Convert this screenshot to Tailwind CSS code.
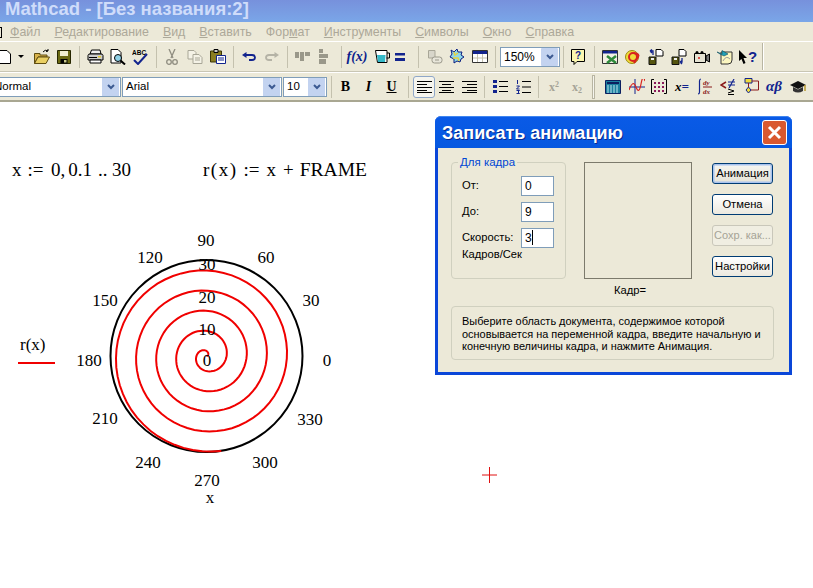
<!DOCTYPE html>
<html><head><meta charset="utf-8"><script src="https://cdn.jsdelivr.net/npm/@tailwindcss/browser@4"></script></head>
<body class="bg-white">
<div class="relative w-[813px] h-[588px] overflow-hidden bg-white font-['DejaVu_Sans',sans-serif] text-black">
  <!-- app title -->
  <div class="h-[22px] bg-gradient-to-b from-[#7791dc] to-[#7aa6e8] pl-[5px] text-[#cfdcfa] font-['Liberation_Sans',sans-serif] font-bold text-[18.500px] leading-[17px] whitespace-nowrap">Mathcad - [Без названия:2]</div>
  <!-- menu -->
  <div class="h-[20px] pt-px bg-[#ece9d8] border-b border-white flex items-center gap-[14px] pl-[10px] text-[#aca899] font-['Liberation_Sans',sans-serif] text-[12.400px] relative whitespace-nowrap">
    <div class="absolute left-0 top-[5px] w-[2px] h-[11px] border-r border-y border-black"></div>
    <span><u>Ф</u>айл</span><span><u>Р</u>едактирование</span><span><u>В</u>ид</span><span><u>В</u>ставить</span><span>Фор<u>м</u>ат</span><span><u>И</u>нструменты</span><span><u>С</u>имволы</span><span><u>О</u>кно</span><span><u>С</u>правка</span>
  </div>
  <!-- standard toolbar -->
  <div class="h-[30px] bg-[#ece9d8] border-b border-[#c9c6b4] flex items-center">
    <div class="w-[11px] flex justify-end"><svg class="w-[11px] h-[16px]" viewBox="0 0 11 16"><path d="M-3 1.5H7L10.500 5V14.500H-3Z" fill="#fff" stroke="#000"/></svg></div>
    <div class="w-[20px] flex justify-center"><svg class="w-[6px] h-[3px]" viewBox="0 0 6 3"><path d="M0 0H6L3 3Z" fill="#000"/></svg></div>
    <div class="w-[21px] flex justify-center"><svg class="w-[16px] h-[15px]" viewBox="0 0 16 15"><path d="M.5 4.500H6V6H13V8H4L.5 14.500Z" fill="#d8b24a" stroke="#5f4d10"/><path d="M4 8H15.500L12 14.500H.5Z" fill="#e9cf63" stroke="#5f4d10"/><path d="M9 3Q11 0 14 2M14 2V0M14 2L12 2.500" fill="none" stroke="#000"/></svg></div>
    <div class="w-[24px] flex justify-center"><svg class="w-[14px] h-[14px]" viewBox="0 0 14 14"><path d="M.5.500H13.500V13.500H.5Z" fill="#6b6a12" stroke="#262600"/><path d="M3 1H11V6H3Z" fill="#f1efcf"/><path d="M3.500 9H10.500V13.500H3.500Z" fill="#000"/><path d="M7 10H9.500V12.500H7Z" fill="#c8c88a"/></svg></div>
    <div class="ml-[3px] w-px h-[22px] bg-[#c4c1ae] mr-[3px]"></div>
    <div class="w-[24px] flex justify-center"><svg class="w-[17px] h-[15px]" viewBox="0 0 17 15"><path d="M4.500 1H13L14 5H3Z" fill="#eee" stroke="#000"/><path d="M1 6.500Q1 5 3 5H14Q16 5 16 6.500V11H1Z" fill="#ccc" stroke="#000"/><path d="M11 7H14V8.500H11Z" fill="#e9cf30"/><path d="M3 11H14V14H3Z" fill="#fff" stroke="#000"/><path d="M2 8.500H10" stroke="#000"/></svg></div>
    <div class="w-[22px] flex justify-center"><svg class="w-[16px] h-[16px]" viewBox="0 0 16 16"><path d="M1 .5H8L11 3.500V14H1Z" fill="#fff" stroke="#000"/><circle cx="8" cy="9" r="3.500" fill="#8fd1e8" stroke="#000"/><path d="M10.500 11.500L15 15.500" stroke="#000" stroke-width="2"/></svg></div>
    <div class="w-[22px] flex justify-center"><svg class="w-[16px] h-[16px]" viewBox="0 0 16 16"><text x="0" y="6" font-size="6.500" font-weight="700" font-family="Liberation Sans" fill="#000">ABC</text><path d="M2 11L6 15L15 5" fill="none" stroke="#12248e" stroke-width="2"/></svg></div>
    <div class="ml-[5px] w-px h-[22px] bg-[#c4c1ae] mr-[4px]"></div>
    <div class="w-[22px] flex justify-center"><svg class="w-[12px] h-[16px]" viewBox="0 0 12 16"><path d="M3 0L7 9M9 0L5 9" stroke="#8f8d80" stroke-width="1.300"/><circle cx="3" cy="13" r="2.300" fill="none" stroke="#8f8d80" stroke-width="1.300"/><circle cx="9" cy="13" r="2.300" fill="none" stroke="#8f8d80" stroke-width="1.300"/></svg></div>
    <div class="w-[24px] flex justify-center"><svg class="w-[16px] h-[14px]" viewBox="0 0 16 14"><path d="M1 .5H7L9 2.500V9H1Z" fill="#f4f2e6" stroke="#a8a697"/><path d="M6 4.500H12L15 7.500V13.500H6Z" fill="#f4f2e6" stroke="#a8a697"/><path d="M8 8H13M8 10H13" stroke="#a8a697"/></svg></div>
    <div class="w-[22px] flex justify-center"><svg class="w-[16px] h-[15px]" viewBox="0 0 16 15"><path d="M.5 2H11.500V13H.5Z" fill="#8a7d20" stroke="#3b3608"/><path d="M4 .5H8V3.500H4Z" fill="#ccc" stroke="#000"/><path d="M6.500 6.500H15.500V14.500H6.500Z" fill="#fff" stroke="#12248e"/><path d="M8 9H14M8 11H14" stroke="#12248e"/></svg></div>
    <div class="ml-[4px] w-px h-[22px] bg-[#c4c1ae] mr-[3px]"></div>
    <div class="w-[24px] flex justify-center"><svg class="w-[14px] h-[9px]" viewBox="0 0 14 9"><path d="M4 3H10Q13 3 13 5.500Q13 8 10 8H7" fill="none" stroke="#12248e" stroke-width="1.800"/><path d="M0 3L4.500 0V6Z" fill="#12248e"/></svg></div>
    <div class="w-[22px] flex justify-center"><svg class="w-[14px] h-[9px]" viewBox="0 0 14 9"><path d="M10 3H4Q1 3 1 5.500Q1 8 4 8H7" fill="none" stroke="#b5b3a6" stroke-width="1.800"/><path d="M14 3L9.500 0V6Z" fill="#b5b3a6"/></svg></div>
    <div class="ml-[4px] w-px h-[22px] bg-[#c4c1ae] mr-[3px]"></div>
    <div class="w-[23px] flex justify-center"><svg class="w-[15px] h-[9px]" viewBox="0 0 15 9"><path d="M0 0H4V6H0ZM5 0H9V9H5ZM10 0H15V4H10Z" fill="#9a988a"/></svg></div>
    <div class="w-[18px] flex justify-center"><svg class="w-[9px] h-[15px]" viewBox="0 0 9 15"><path d="M0 0H4V4H0ZM0 5H9V9H0ZM0 10H7V15H0Z" fill="#9a988a"/></svg></div>
    <div class="ml-[9px] w-px h-[22px] bg-[#c4c1ae] mr-[3px]"></div>
    <div class="w-[24px] flex justify-center font-['Liberation_Serif',serif] font-bold italic text-[14px] text-[#0b1f8c] leading-none">f(x)</div>
    <div class="w-[26px] flex justify-center"><svg class="w-[15px] h-[13px]" viewBox="0 0 15 13"><path d="M.5.500H12V12.500H2.500Z" fill="#fff" stroke="#000"/><path d="M2 5H10.500L10 12H3Z" fill="#35b9c8"/><path d="M12 3H14.500V8H11.500" fill="none" stroke="#000"/></svg></div>
    <div class="w-[10px] flex justify-center"><svg class="w-[10px] h-[8px] shrink-0" viewBox="0 0 10 8"><path d="M0 0H10V2.500H0ZM0 5H10V8H0Z" fill="#12248e"/></svg></div>
    <div class="ml-[13px] w-px h-[22px] bg-[#c4c1ae] mr-[9px]"></div>
    <div class="w-[14px] flex justify-center shrink-0"><svg class="w-[15px] h-[14px] shrink-0" viewBox="0 0 15 14"><path d="M.5.500H7V8H.5Z" fill="#d8d6ca" stroke="#a8a697"/><rect x="4" y="7" width="10" height="6" rx="2.500" fill="#e8e6da" stroke="#9a988a"/><path d="M7 10H11" stroke="#9a988a"/></svg></div>
    <div class="w-[30px] flex justify-center"><svg class="w-[16px] h-[15px]" viewBox="0 0 16 15"><path d="M2 1L5 3L8 0L9 3H13L12 6L15 8L12 10L11 13L8 12L5 14L5 10L1 8L3 5Z" fill="#8fd8ea" stroke="#0c1f80"/><path d="M5 3L6 6L9 4M4 9H9L10 12" fill="none" stroke="#e6d23c" stroke-width="1.500"/></svg></div>
    <div class="w-[16px] flex justify-center"><svg class="w-[16px] h-[13px] shrink-0" viewBox="0 0 16 13"><path d="M.5.500H15.500V12.500H.5Z" fill="#fff" stroke="#333"/><path d="M1 1H15V4H1Z" fill="#12248e"/><path d="M1 8H15M5.500 4V12M10.500 4V12" stroke="#c4c1ae"/></svg></div>
    <div class="ml-[7px] w-px h-[22px] bg-[#c4c1ae] mr-[4px]"></div>
    <div class="w-[60px] h-[20px] border border-[#7f9db9] bg-white flex items-center pl-[3px] pr-px font-['Liberation_Sans',sans-serif] text-[12px]"><span class="flex-1">150%</span><span class="w-[17px] h-[18px] bg-[#c3d3f0] rounded-[1px] flex items-center justify-center"><svg class="w-[8px] h-[6px]" viewBox="0 0 8 6"><path d="M1 1L4 4L7 1" fill="none" stroke="#3c5a92" stroke-width="2"/></svg></span></div>
    <div class="ml-[3px] w-px h-[22px] bg-[#c4c1ae] mr-[4px]"></div>
    <div class="w-[20px] flex justify-center"><svg class="w-[14px] h-[16px]" viewBox="0 0 14 16"><path d="M.5.500H13.500V12.500H6L3 15.500V12.500H.5Z" fill="#fbf6b0" stroke="#000"/><text x="4" y="10" font-size="10" font-weight="700" font-family="Liberation Sans" fill="#12248e">?</text></svg></div>
    <div class="ml-[6px] w-px h-[22px] bg-[#c4c1ae] mr-[5px]"></div>
    <div class="w-[20px] flex justify-center"><svg class="w-[16px] h-[14px]" viewBox="0 0 16 14"><path d="M.5.500H15.500V13.500H.5Z" fill="#f3f1e4" stroke="#333"/><path d="M1 1H15V3.500H1Z" fill="#12248e"/><path d="M5 6L14 13M14 6L5 13" stroke="#2f8a3a" stroke-width="2.500"/></svg></div>
    <div class="w-[26px] flex justify-center"><svg class="w-[16px] h-[16px]" viewBox="0 0 16 16"><circle cx="7" cy="8" r="6.500" fill="#f0dc3c" stroke="#9a8a10"/><circle cx="8" cy="8" r="4" fill="none" stroke="#d8231f" stroke-width="2"/><path d="M9 4Q15 5 13 8L9 14" fill="none" stroke="#d8231f" stroke-width="2"/></svg></div>
    <div class="w-[20px] flex justify-center"><svg class="w-[16px] h-[16px]" viewBox="0 0 16 16"><path d="M8 .5H13L15 2.500V7H8Z" fill="#fff" stroke="#000"/><path d="M1 8H8V15.500H1Z" fill="#55550f" stroke="#111"/><path d="M3 9H6V11H3Z" fill="#eee"/><path d="M6 6V2H3M3 2L5 .500M3 2L5 4" transform="translate(-1 0)" fill="none" stroke="#12248e" stroke-width="1.300"/></svg></div>
    <div class="w-[26px] flex justify-center"><svg class="w-[16px] h-[16px]" viewBox="0 0 16 16"><path d="M8 .5H13L15 2.500V7H8Z" fill="#fff" stroke="#000"/><path d="M1 8H8V15.500H1Z" fill="#55550f" stroke="#111"/><path d="M3 9H6V11H3Z" fill="#eee"/><path d="M11 9V13H9M9 13L11 11.500M9 13L11 15" fill="none" stroke="#12248e" stroke-width="1.300"/></svg></div>
    <div class="w-[20px] flex justify-center"><svg class="w-[16px] h-[12px]" viewBox="0 0 16 12"><path d="M.5 2.500H11.500V11.500H.5Z" fill="#e4e2d2" stroke="#000"/><circle cx="3" cy="1.500" r="1.500" fill="#000"/><circle cx="8" cy="1.500" r="1.500" fill="#000"/><path d="M12 5L15.500 3V11L12 9Z" fill="#777" stroke="#000"/><circle cx="5" cy="7" r="1" fill="#d8231f"/></svg></div>
    <div class="w-[26px] flex justify-center"><svg class="w-[16px] h-[16px]" viewBox="0 0 16 16"><path d="M4 3H15V11Q15 15 11 15H4Z" fill="#fbf6c0" stroke="#333"/><path d="M6 12Q9 6 13 10" fill="none" stroke="#999"/><path d="M0 3L5 5L5 1.500L11 5L7 7L3 5Z" fill="#22a0b8" stroke="#0a4a5a" stroke-width=".6"/></svg></div>
    <div class="w-[20px] flex justify-center items-center"><svg class="w-[9px] h-[14px] shrink-0" viewBox="0 0 9 14"><path d="M0 0L8 8H4.500L6.500 13L4.500 14L2.500 9L0 11Z" fill="#000"/></svg><span class="font-['Liberation_Sans',sans-serif] font-bold text-[15px] leading-none text-[#12248e]">?</span></div>
    <div class="ml-[4px] w-[2px] h-[27px] bg-[#b8b5a2] border-r border-white"></div>
  </div>
  <!-- formatting toolbar -->
  <div class="h-[30px] bg-[#ece9d8] border-t border-white border-b-2 border-b-[#a9a792] flex items-center font-['Liberation_Sans',sans-serif] text-[11.500px]">
    <div class="w-[121px] h-[20px] border border-[#7f9db9] border-l-0 bg-white flex items-center overflow-hidden"><span class="flex-1 ml-[-6px] whitespace-nowrap">Normal</span><span class="w-[17px] h-[18px] bg-[#c3d3f0] mr-px flex items-center justify-center"><svg class="w-[8px] h-[6px]" viewBox="0 0 8 6"><path d="M1 1L4 4L7 1" fill="none" stroke="#3c5a92" stroke-width="2"/></svg></span></div>
    <div class="ml-px w-[160px] h-[20px] border border-[#7f9db9] bg-white flex items-center pl-[3px]"><span class="flex-1">Arial</span><span class="w-[17px] h-[18px] bg-[#c3d3f0] mr-px flex items-center justify-center"><svg class="w-[8px] h-[6px]" viewBox="0 0 8 6"><path d="M1 1L4 4L7 1" fill="none" stroke="#3c5a92" stroke-width="2"/></svg></span></div>
    <div class="ml-px w-[44px] h-[20px] border border-[#7f9db9] bg-white flex items-center pl-[3px]"><span class="flex-1">10</span><span class="w-[17px] h-[18px] bg-[#c3d3f0] mr-px flex items-center justify-center"><svg class="w-[8px] h-[6px]" viewBox="0 0 8 6"><path d="M1 1L4 4L7 1" fill="none" stroke="#3c5a92" stroke-width="2"/></svg></span></div>
    <div class="ml-[4px] w-px h-[22px] bg-[#c4c1ae] mr-[2px]"></div>
    <div class="w-[23px] text-center font-['Liberation_Serif',serif] font-bold text-[14px] leading-none">B</div>
    <div class="w-[23px] text-center font-['Liberation_Serif',serif] font-bold italic text-[14px] leading-none">I</div>
    <div class="w-[23px] text-center font-['Liberation_Serif',serif] font-bold underline text-[14px] leading-none">U</div>
    <div class="ml-[5px] w-px h-[22px] bg-[#c4c1ae] mr-[4px]"></div>
    <div class="w-[22px] h-[22px] rounded-[3px] border border-[#8fa7c8] bg-[#f6f5ee] flex items-center justify-center"><svg class="w-[15px] h-[12px]" viewBox="0 0 15 12"><path d="M0 .5H15M0 3.500H10M0 6.500H15M0 9.500H10M0 11.500H15" stroke="#000"/></svg></div>
    <div class="w-[22px] flex justify-center"><svg class="w-[15px] h-[12px]" viewBox="0 0 15 12"><path d="M0 .5H15M3 3.500H12M0 6.500H15M3 9.500H12M0 11.500H15" stroke="#000"/></svg></div>
    <div class="w-[24px] flex justify-center"><svg class="w-[15px] h-[12px]" viewBox="0 0 15 12"><path d="M0 .5H15M5 3.500H15M0 6.500H15M5 9.500H15M0 11.500H15" stroke="#000"/></svg></div>
    <div class="ml-[3px] w-px h-[22px] bg-[#c4c1ae] mr-[4px]"></div>
    <div class="w-[22px] flex justify-center"><svg class="w-[15px] h-[13px]" viewBox="0 0 15 13"><path d="M0 0H4V3H0ZM0 5H4V8H0ZM0 10H4V13H0Z" fill="#12248e"/><path d="M6 1.500H15M6 6.500H15M6 11.500H15" stroke="#000"/></svg></div>
    <div class="w-[24px] flex justify-center"><svg class="w-[15px] h-[14px]" viewBox="0 0 15 14"><path d="M1.500 0V4M.5 6H3.500L.5 9H3.500M.5 10.500H3.500L2 12L3.500 13.500H.5" fill="none" stroke="#12248e"/><path d="M6 1.500H15M6 7H15M6 12.500H15" stroke="#000"/></svg></div>
    <div class="ml-[3px] w-px h-[22px] bg-[#c4c1ae] mr-[3px]"></div>
    <div class="w-[24px] text-center text-[#a5a396] font-['Liberation_Serif',serif] font-bold text-[12px] leading-none">x<sup class="text-[8px]">2</sup></div>
    <div class="w-[22px] text-center text-[#a5a396] font-['Liberation_Serif',serif] font-bold text-[12px] leading-none">x<sub class="text-[8px]">2</sub></div>
    <div class="ml-[4px] w-[3px] h-[24px] bg-[#f6f5ee] border border-[#b8b5a2] mr-[8px]"></div>
    <div class="w-[20px] flex justify-center"><svg class="w-[16px] h-[14px]" viewBox="0 0 16 14"><path d="M.5.500H15.500V13.500H.5Z" fill="#1c7f9f" stroke="#0c1f60"/><path d="M2 2H14V4H2Z" fill="#0c1f60"/><path d="M2 6H14M2 8H14M2 10H14M2 12H14" stroke="#bfe8f0" stroke-dasharray="2 1"/></svg></div>
    <div class="w-[28px] flex justify-center"><svg class="w-[16px] h-[15px]" viewBox="0 0 16 15"><path d="M0 8H16M6 0V15" stroke="#12248e"/><path d="M0 11Q4 0 7 8T12 5T16 2" fill="none" stroke="#d8231f" stroke-width="1.200"/></svg></div>
    <div class="w-[16px] flex justify-center shrink-0"><svg class="w-[16px] h-[15px] shrink-0" viewBox="0 0 16 15"><path d="M3 .5H.5V14.500H3M13 .5H15.500V14.500H13" fill="none" stroke="#000"/><path d="M3 3H5V5H3ZM7 3H9V5H7ZM11 3H13V5H11ZM3 7H5V9H3ZM7 7H9V9H7ZM11 7H13V9H11ZM3 11H5V13H3ZM7 11H9V13H7ZM11 11H13V13H11Z" fill="#8a1a5a"/></svg></div>
    <div class="w-[30px] flex justify-center items-center font-['Liberation_Serif',serif] italic font-bold text-[13px] leading-none text-[#12248e]"><span class="text-black">x</span>=</div>
    <div class="w-[16px] flex justify-center shrink-0"><svg class="w-[16px] h-[17px] shrink-0" viewBox="0 0 16 17"><path d="M4 1Q2.500 1 2.500 3V14Q2.500 16 1 16" fill="none" stroke="#12248e" stroke-width="1.200"/><text x="6" y="7" font-size="7" font-style="italic" font-weight="700" font-family="Liberation Serif" fill="#8a1a1a">dy</text><path d="M6 9H15" stroke="#8a1a1a"/><text x="6" y="16" font-size="7" font-style="italic" font-weight="700" font-family="Liberation Serif" fill="#8a1a1a">dx</text></svg></div>
    <div class="w-[28px] flex justify-center"><svg class="w-[15px] h-[16px]" viewBox="0 0 15 16"><path d="M6 3L1 6L6 9" fill="none" stroke="#8a1a1a" stroke-width="1.500"/><path d="M8 3H15M8 6H15M14 0L9 9" stroke="#12248e" stroke-width="1.200"/><path d="M8 10L14 12L8 14M8 15.500H14" fill="none" stroke="#000"/></svg></div>
    <div class="w-[20px] flex justify-center"><svg class="w-[15px] h-[17px]" viewBox="0 0 15 17"><path d="M1 .5H8V5H1Z" fill="#f0dc3c" stroke="#12248e"/><path d="M4.500 9L7 12L4.500 15L2 12Z" fill="#f0dc3c" stroke="#12248e"/><path d="M4.500 5V9M8 3H14.500V12H7" fill="none" stroke="#8a1a1a"/></svg></div>
    <div class="w-[26px] flex justify-center font-['Liberation_Serif',serif] italic font-bold text-[15px] leading-none text-[#12248e]">αβ</div>
    <div class="w-[22px] flex justify-center"><svg class="w-[16px] h-[14px]" viewBox="0 0 16 14"><path d="M0 5L8 1L16 5L8 9Z" fill="#111"/><path d="M3 7V11Q8 14 13 11V7L8 9.500Z" fill="#333"/><path d="M15 5V11" stroke="#b89a30" stroke-width="1.500"/></svg></div>
  </div>

  <!-- document: regions on a free canvas -->
  <div class="absolute left-0 top-[100px] right-0 bottom-0 font-['Liberation_Serif',serif] text-[19px] leading-none whitespace-nowrap">
    <div class="absolute left-[12px] top-[60px] flex"><span>x</span><span class="ml-[6px]">:=</span><span class="ml-[7.500px]">0</span><span>,</span><span class="ml-[3px]">0.1</span><span class="ml-[6px]">..</span><span class="ml-[4.500px]">30</span></div>
    <div class="absolute left-[203px] top-[60px] flex"><span class="tracking-[1.500px]">r(x)</span><span class="ml-[6px]">:=</span><span class="ml-[7px]">x</span><span class="ml-[7px]">+</span><span class="ml-[6px] text-[19.500px]">FRAME</span></div>
    <div class="absolute left-[20px] top-[236px] text-[17px]">r(x)</div>
    <div class="absolute left-[18px] top-[262px] w-[37px] h-[2px] bg-[#f00000]"></div>
    <svg class="absolute left-0 top-0 w-[813px] h-[488px]" viewBox="0 100 813 488">
      <circle cx="206.500" cy="356" r="96" fill="none" stroke="#000" stroke-width="2"/>
      <polyline id="spiral" fill="none" stroke="#f00000" stroke-width="2" points=""/>
      <g font-family="Liberation Serif" font-size="17" text-anchor="middle" fill="#000">
        <text x="206" y="246">90</text><text x="150" y="263">120</text><text x="266" y="263">60</text>
        <text x="105" y="306">150</text><text x="311" y="306">30</text><text x="89" y="366">180</text>
        <text x="327" y="366">0</text><text x="105" y="424">210</text><text x="310" y="425">330</text>
        <text x="148" y="468">240</text><text x="265" y="468">300</text><text x="207" y="486">270</text>
        <text x="210" y="503">x</text><text x="207" y="270">30</text><text x="207" y="303">20</text>
        <text x="207" y="335">10</text><text x="207" y="366">0</text>
      </g>
      <path d="M482 475H497M489.500 467V483" stroke="#e01010" stroke-width="1"/>
    </svg>
  </div>

  <!-- dialog -->
  <div class="absolute left-[435px] top-[116px] w-[357px] h-[259px] rounded-t-[6px] bg-[#0a46d8] p-[3px] pt-0 flex flex-col font-['Liberation_Sans',sans-serif] text-[11.200px] leading-none">
    <div class="h-[32px] shrink-0 -mx-[3px] rounded-t-[6px] bg-gradient-to-b from-[#0a5ae6] to-[#0558e0] flex items-center pl-[7px] pr-[5px] border-t border-[#3f86f0]">
      <span class="flex-1 text-white font-bold text-[18px] [text-shadow:1px_1px_#0a2a90] whitespace-nowrap">Записать анимацию</span>
      <span class="w-[25px] h-[25px] rounded-[3px] border border-white bg-[#d9582f] flex items-center justify-center"><svg class="w-[15px] h-[15px]" viewBox="0 0 15 15"><path d="M2 2L13 13M13 2L2 13" stroke="#fff" stroke-width="3"/></svg></span>
    </div>
    <div class="flex-1 bg-[#ece9d8] px-[13px] pt-[14px] flex flex-col">
      <div class="flex h-[117px]">
        <div class="relative w-[115px] h-[117px] border border-[#d0d0bf] rounded-[4px] pl-[10px] pt-[12px]">
          <span class="absolute left-[6px] top-[-6px] bg-[#ece9d8] px-[2px] text-[#0046d5] text-[11.500px]">Для кадра</span>
          <div class="flex items-center h-[20px] mb-[6px] pt-px"><span class="w-[59px]">От:</span><span class="w-[33px] h-[20px] border border-[#7f9db9] bg-white pl-[3px] flex items-center text-[12px]">0</span></div>
          <div class="flex items-center h-[20px] mb-[6px] pt-px"><span class="w-[59px]">До:</span><span class="w-[33px] h-[20px] border border-[#7f9db9] bg-white pl-[3px] flex items-center text-[12px]">9</span></div>
          <div class="flex items-center h-[20px] pt-px"><span class="w-[59px]">Скорость:</span><span class="w-[33px] h-[20px] border border-[#7f9db9] bg-white pl-[3px] flex items-center text-[12px]">3<span class="w-px h-[15px] bg-black"></span></span></div>
          <div class="mt-[2px] h-[12px]">Кадров/Сек</div>
        </div>
        <div class="ml-[18px] w-[108px] h-[117px] border border-[#7c7a6c]"></div>
        <div class="ml-[20px] w-[61px] flex flex-col gap-[10px] pt-px">
          <div class="h-[21px] rounded-[3px] border border-[#003c74] bg-gradient-to-b from-[#f6f6f2] to-[#e6e3d6] shadow-[inset_0_0_0_1.5px_#a9c3ee] flex items-center justify-center">Анимация</div>
          <div class="h-[21px] rounded-[3px] border border-[#003c74] bg-gradient-to-b from-white to-[#ece9df] flex items-center justify-center">Отмена</div>
          <div class="h-[21px] rounded-[3px] border border-[#c9c7ba] bg-[#f0eee2] text-[#a5a396] flex items-center justify-center text-[11px]">Сохр. как...</div>
          <div class="h-[21px] rounded-[3px] border border-[#003c74] bg-gradient-to-b from-white to-[#ece9df] flex items-center justify-center">Настройки</div>
        </div>
      </div>
      <div class="ml-[125px] w-[108px] text-center mt-[6px] h-[13px]">Кадр=</div>
      <div class="mt-[8px] w-[323px] h-[54px] border border-[#d0d0bf] rounded-[4px] pl-[10px] pt-[8px] text-[10.950px] leading-[12.500px] whitespace-nowrap">Выберите область документа, содержимое которой<br>основывается на переменной кадра, введите начальную и<br>конечную величины кадра, и нажмите Анимация.</div>
    </div>
  </div>
</div>
<script>
  var p = [];
  for (var i = 0; i <= 300; i++) {
    var x = i / 10, r = x * 3.2;
    p.push((206.5 + r * Math.cos(x)).toFixed(1) + ',' + (356 - r * Math.sin(x)).toFixed(1));
  }
  document.getElementById('spiral').setAttribute('points', p.join(' '));
</script>
</body></html>
